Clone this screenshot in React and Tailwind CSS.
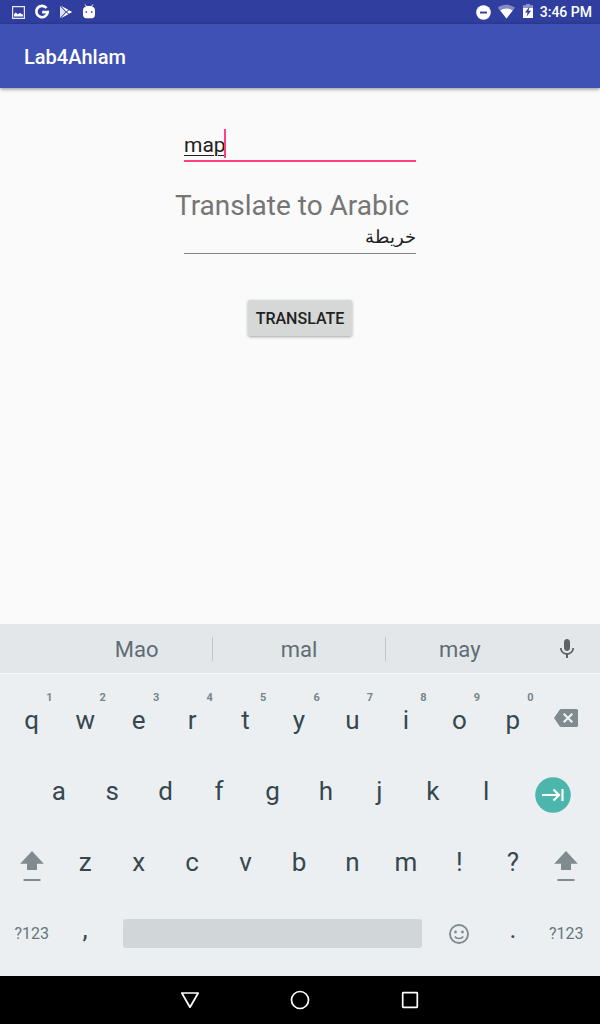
import React from "react";

const KEY = "relative flex h-full min-w-0 items-center justify-center text-[26px] leading-8 text-[#37474f]";
const ROW = "grid h-[71px] grid-cols-11";

function Key({ label, hint }) {
  return (
    <button type="button" className={KEY}>
      {label}
      {hint && (
        <span className="absolute top-[6px] right-[6px] text-[11px] leading-4 font-bold text-[#78858a]">{hint}</span>
      )}
    </button>
  );
}

function PunctuationKey({ label }) {
  return (
    <button type="button" className="flex h-full min-w-0 items-center justify-center pb-[10px] text-[26px] leading-8 text-[#37474f]">
      {label}
    </button>
  );
}

function ShiftKey() {
  return (
    <button type="button" aria-label="Shift" className="flex h-full min-w-0 items-center justify-center pt-2">
      <svg width="26" height="32" viewBox="0 0 26 32" fill="#808b8f">
        <path d="M13 1 1.200 13.800H8V20h10v-6.200h6.800z" />
        <path d="M4.500 29h17v2h-17z" />
      </svg>
    </button>
  );
}

function SymbolsKey() {
  return (
    <button type="button" className="flex min-w-0 items-center justify-center text-base text-[#68767c]">
      ?123
    </button>
  );
}

function StatusBar() {
  return (
    <div className="flex h-6 items-center justify-between bg-[#303f9f] pr-2 pl-3 text-white">
      <div className="flex items-center gap-[9px]">
        <svg width="13" height="13" viewBox="0 0 13 13" fill="none">
          <path d="M.6.600h11.800v11.800H.6z" stroke="#e8eaf6" strokeWidth="1.200" />
          <path d="M2 10.500V8l1.800-1.500L5.500 8.200 8 7l3 1.800v1.700z" fill="#fff" />
        </svg>
        <svg width="16" height="16" viewBox="0 0 16 16" fill="none" stroke="#fff" strokeWidth="2.700">
          <path d="M12.500 4A5.700 5.700 0 1 0 13.700 8.100H8.200" />
        </svg>
        <svg width="14" height="14" viewBox="0 0 14 14" fill="#fff">
          <path d="M1 1v12l5.500-6z" opacity=".85" />
          <path d="M2 .8 9.300 4.800 7.200 6.600zM2 13.200l7.300-4-2.100-1.800zM10 5.200 13.200 7 10 8.800 8 7z" />
        </svg>
        <svg width="14" height="16" viewBox="0 0 14 16">
          <path d="m3.200.5 1.500 2.500M10.800.5 9.300 3" stroke="#fff" />
          <path d="M1 6.500C1 3.500 3.200 2 7 2s6 1.500 6 4.500v4c0 2.500-1.500 3.700-3 3.700H4c-1.500 0-3-1.200-3-3.700z" fill="#fff" />
          <path d="M3.500 7.200h1.600v1.600H3.500zM8.900 7.200h1.600v1.600H8.900z" fill="#303f9f" />
        </svg>
      </div>
      <div className="flex items-center">
        <svg width="16" height="16" viewBox="0 0 16 16">
          <circle cx="8.500" cy="8.500" r="7.300" fill="#fff" />
          <path d="M5 7.600h7v1.900H5z" fill="#303f9f" />
        </svg>
        <svg className="ml-[6px]" width="18" height="16" viewBox="0 0 18 16" fill="#fff">
          <path d="M.8 3.700C5.800-.1 13.200-.1 18 3.700L9.500 14.500z" opacity=".4" />
          <path d="M3.300 6.500C7 3.700 12 3.700 15.700 6.500L9.500 14.500z" />
        </svg>
        <svg className="ml-2" width="10" height="16" viewBox="0 0 10 16">
          <path d="M0 1.200h3V0h4v1.200h3v2.800H0z" fill="#fff" opacity=".45" />
          <path d="M0 4h10v10H0z" fill="#fff" />
          <path d="M6.600 2.500 2 8.500h2.500l-.8 4L8 6.700H5.500z" fill="#303f9f" />
        </svg>
        <span className="ml-[7px] text-sm font-medium">3:46 PM</span>
      </div>
    </div>
  );
}

function Suggestions() {
  return (
    <div className="flex h-[50px] items-center border-b border-[#f8f9fa] bg-[#e3e7ea] pl-[61px] text-[22px] text-[#5f6d73]">
      <button type="button" className="h-6 flex-[152] leading-[26px]">Mao</button>
      <button type="button" className="h-6 flex-[172] border-x border-[#bfc6ca] leading-[26px]">mal</button>
      <button type="button" className="h-6 flex-[149] leading-[26px]">may</button>
      <button type="button" aria-label="Voice input" className="flex w-[66px] justify-center">
        <svg width="24" height="24" viewBox="0 0 24 24" fill="#5f6163">
          <path d="M12 14c1.660 0 3-1.340 3-3V5c0-1.660-1.340-3-3-3S9 3.340 9 5v6c0 1.660 1.340 3 3 3z" />
          <path d="M17.300 11c0 3-2.540 5.100-5.300 5.100S6.700 14 6.700 11H5c0 3.410 2.720 6.230 6 6.720V21h2v-3.280c3.280-.48 6-3.300 6-6.720z" />
        </svg>
      </button>
    </div>
  );
}

function Keyboard() {
  return (
    <section aria-label="Keyboard" className="bg-[#ebeff2]">
      <Suggestions />
      <div className="pt-[10px] pr-[7px] pb-[6px] pl-[5px]">
        <div className={ROW}>
          {"qwertyuiop".split("").map((k, i) => (
            <Key key={k} label={k} hint={String((i + 1) % 10)} />
          ))}
          <button type="button" aria-label="Backspace" className="flex h-full min-w-0 items-center justify-center pb-1">
            <svg width="24" height="18" viewBox="0 0 24 18">
              <path d="M7 0h15.500Q24 0 24 1.500v15Q24 18 22.500 18H7q-.8 0-1.300-.8L0 9 5.700.8Q6.200 0 7 0z" fill="#808b8f" />
              <path d="m9.700 4.700 8.600 8.600m0-8.600-8.600 8.600" stroke="#ebeff2" strokeWidth="2.200" />
            </svg>
          </button>
        </div>
        <div className="flex h-[71px]">
          <div className="w-[27px]" />
          <div className="grid flex-1 grid-cols-9">
            {"asdfghjkl".split("").map((k) => (
              <Key key={k} label={k} />
            ))}
          </div>
          <button type="button" aria-label="Next field" className="flex w-20 items-center justify-center pt-2">
            <svg width="36" height="36" viewBox="0 0 36 36">
              <circle cx="18" cy="18" r="17.800" fill="#4db6ac" />
              <path d="M7 18h17M18.500 12.500 24 18l-5.500 5.500M27.500 12v12" fill="none" stroke="#fff" strokeWidth="2.200" />
            </svg>
          </button>
        </div>
        <div className={ROW}>
          <ShiftKey />
          {"zxcvbnm!?".split("").map((k) => (
            <Key key={k} label={k} />
          ))}
          <ShiftKey />
        </div>
        <div className="grid h-[73px] grid-cols-11">
          <SymbolsKey />
          <PunctuationKey label="," />
          <button type="button" aria-label="Space" className="col-span-6 flex items-center px-[11px]">
            <span className="h-[29px] w-full rounded-[3px] bg-[#d1d6d9]" />
          </button>
          <button type="button" aria-label="Emoji" className={KEY}>
            <svg width="20" height="20" viewBox="0 0 20 20" fill="none" stroke="#808b8f">
              <circle cx="10" cy="10" r="9" strokeWidth="1.900" />
              <path d="M5.800 12.500c1.600 2.600 6.800 2.600 8.400 0" strokeWidth="1.600" />
              <circle cx="6.500" cy="8" r="1.400" fill="#808b8f" stroke="none" />
              <circle cx="13.500" cy="8" r="1.400" fill="#808b8f" stroke="none" />
            </svg>
          </button>
          <PunctuationKey label="." />
          <SymbolsKey />
        </div>
      </div>
    </section>
  );
}

function NavBar() {
  return (
    <nav className="flex h-12 items-center justify-center gap-[86px] bg-black">
      <button type="button" aria-label="Back">
        <svg width="24" height="24" viewBox="0 0 24 24" fill="none" stroke="#fff" strokeWidth="1.700">
          <path d="M3.800 5h16.400L12 19.200z" strokeLinejoin="round" />
        </svg>
      </button>
      <button type="button" aria-label="Home">
        <svg width="24" height="24" viewBox="0 0 24 24" fill="none" stroke="#fff" strokeWidth="1.700">
          <circle cx="12" cy="12" r="8.500" />
        </svg>
      </button>
      <button type="button" aria-label="Recent apps">
        <svg width="24" height="24" viewBox="0 0 24 24" fill="none" stroke="#fff" strokeWidth="1.700">
          <rect x="4.700" y="4.700" width="14.600" height="14.600" rx=".5" />
        </svg>
      </button>
    </nav>
  );
}

export default function App() {
  return (
    <div className="flex min-h-screen flex-col bg-[#fafafa] font-['Roboto',sans-serif]">
      <StatusBar />
      <header className="flex h-16 items-center bg-[#3f51b5] px-6 pt-[2px] shadow-[0_1px_4px_rgba(0,0,0,0.45)]">
        <h1 className="text-xl font-medium text-white">Lab4Ahlam</h1>
      </header>
      <main className="flex flex-1 flex-col items-center pt-10">
        <div className="flex h-[34px] w-[232px] items-start border-b-2 border-[#ff4081]">
          <input
            aria-label="Word"
            defaultValue="map"
            className="h-8 field-sizing-content bg-transparent pt-[2px] text-[21px] text-[#212121] underline decoration-1 underline-offset-[3px] outline-none"
          />
          <span className="-ml-[2px] mt-px h-[29px] w-[2px] bg-[#ff4081]" />
        </div>
        <label htmlFor="arabic" className="mt-[26px] w-[250px] text-[28px] leading-9 text-[#757575]">
          Translate to Arabic
        </label>
        <input
          id="arabic"
          dir="rtl"
          lang="ar"
          defaultValue="خريطة"
          className="h-[30px] w-[232px] border-b border-[#858585] bg-transparent pb-1 text-[18px] text-[#212121] outline-none"
        />
        <button
          type="button"
          className="mt-[46px] h-9 rounded-[2px] bg-[#d6d7d7] px-2 pt-[2px] text-base font-medium text-[#212121] shadow-[0_1px_3px_rgba(0,0,0,0.35)]"
        >
          TRANSLATE
        </button>
      </main>
      <Keyboard />
      <NavBar />
    </div>
  );
}
